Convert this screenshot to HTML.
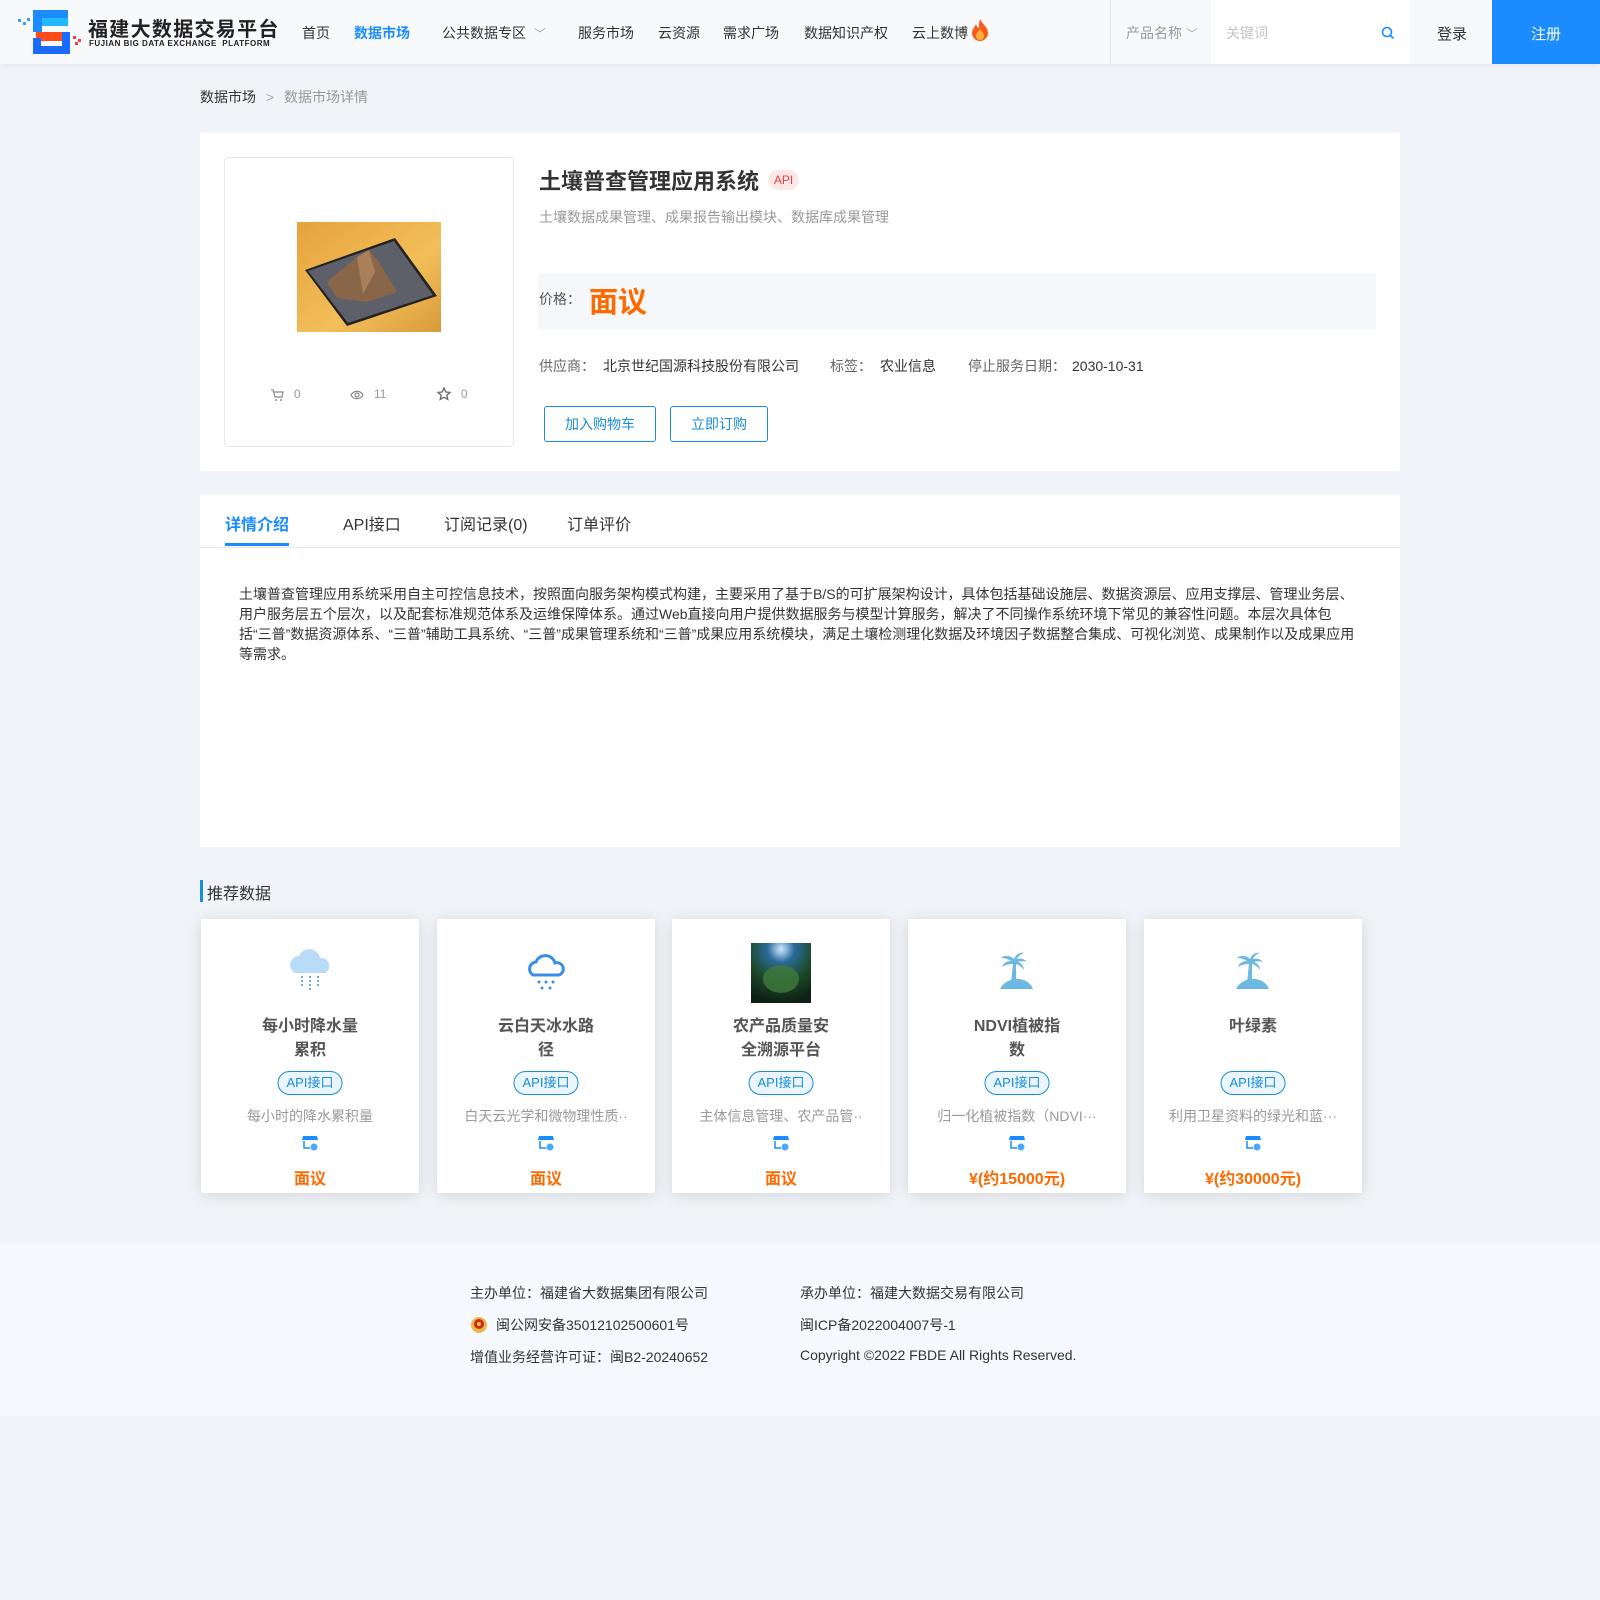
<!DOCTYPE html>
<html><head><meta charset="utf-8"><style>
*{margin:0;padding:0;box-sizing:border-box}
body{width:1600px;height:1600px;background:#f0f3f7;font-family:"Liberation Sans","Noto Sans CJK SC",sans-serif;color:#333;position:relative;overflow:hidden;font-size:14px}
.a{position:absolute;white-space:nowrap}
.hdr{position:absolute;left:0;top:0;width:1600px;height:64px;background:#f8f9fb;box-shadow:0 1px 4px rgba(0,0,0,.06)}
.nav{font-size:14px;color:#333;top:23px}
.card{position:absolute;background:#fff}
.rc{position:absolute;top:919px;width:218px;height:274px;background:#fff;box-shadow:0 2px 14px rgba(0,0,0,.12);text-align:center}
.rc .t{position:absolute;left:0;right:0;top:96px;font-size:16px;font-weight:bold;color:#555;line-height:24px}
.rc .tag{position:absolute;left:50%;transform:translateX(-50%);top:152px;height:24px;padding:0 8px;border:1px solid #1a8cd8;border-radius:12px;background:#eaf5fd;color:#1a8cd8;font-size:13px;line-height:22px}
.rc .d{position:absolute;left:20px;right:20px;top:187px;font-size:14px;color:#999;overflow:hidden;text-overflow:ellipsis;white-space:nowrap}
.rc .s{position:absolute;left:101px;top:216px}
.rc .p{position:absolute;left:0;right:0;top:246px;font-size:16px;font-weight:bold;color:#ff6a00}
.ic{position:absolute;left:84px;top:26px}
</style></head><body>
<div class="hdr">
<svg class="a" style="left:16px;top:10px" width="68" height="44" viewBox="0 0 68 44">
<rect x="17" y="0" width="35" height="8" fill="#1a8cff"/><rect x="17" y="0" width="9" height="22" fill="#1a8cff"/>
<rect x="26" y="8" width="26" height="8" fill="#22b8ff"/>
<rect x="20" y="22" width="34" height="9" fill="#ff4a1a"/><rect x="46" y="22" width="8" height="22" fill="#1a6cff"/><rect x="17" y="36" width="37" height="8" fill="#1a6cff"/><rect x="17" y="28" width="8" height="16" fill="#1a6cff"/>
<rect x="2" y="9" width="3" height="3" fill="#3aa0ff"/><rect x="7" y="12" width="3" height="3" fill="#3aa0ff"/><rect x="11" y="8" width="3" height="3" fill="#3aa0ff"/>
<rect x="57" y="26" width="3" height="3" fill="#ff3a3a"/><rect x="62" y="29" width="3" height="3" fill="#ff3a3a"/><rect x="59" y="32" width="3" height="3" fill="#ff3a3a"/>
</svg>
<div class="a" style="left:88px;top:13px;font-size:20px;font-weight:bold;color:#222;letter-spacing:1.3px">福建大数据交易平台</div>
<div class="a" style="left:89px;top:39px;font-size:8px;font-weight:bold;color:#222;letter-spacing:.5px">FUJIAN BIG DATA EXCHANGE&nbsp; PLATFORM</div>
<div class="a nav" style="left:302px">首页</div>
<div class="a nav" style="left:354px;color:#1a8cff;font-weight:bold">数据市场</div>
<div class="a nav" style="left:442px">公共数据专区 <span style="color:#aaa;font-size:12px;margin-left:4px">﹀</span></div>
<div class="a nav" style="left:578px">服务市场</div>
<div class="a nav" style="left:658px">云资源</div>
<div class="a nav" style="left:723px">需求广场</div>
<div class="a nav" style="left:804px">数据知识产权</div>
<div class="a nav" style="left:912px">云上数博</div>
<svg class="a" style="left:971px;top:19px" width="18" height="22" viewBox="0 0 18 22"><path d="M9 0C11 5 17 8 17 14a8 8 0 0 1-16 0C1 10 4 8 5 5c1 3 2 4 3 4C8 6 8 3 9 0z" fill="#ff5a1a"/><path d="M9 10c2 3 4 4 4 7a4 4 0 0 1-8 0c0-2 2-4 4-7z" fill="#ffb23a"/></svg>
<div class="a" style="left:1110px;top:0;width:1px;height:64px;background:#e3e6ea"></div>
<div class="a" style="left:1126px;top:23px;font-size:14px;color:#999">产品名称 <span style="font-size:12px;color:#aaa">﹀</span></div>
<div class="a" style="left:1211px;top:0;width:199px;height:64px;background:#fff"></div>
<div class="a" style="left:1226px;top:23px;font-size:14px;color:#c4c4c4">关键词</div>
<svg class="a" style="left:1381px;top:26px" width="14" height="14" viewBox="0 0 14 14"><circle cx="6" cy="6" r="4.5" fill="none" stroke="#1a8cff" stroke-width="1.6"/><path d="M9.5 9.5l3 3" stroke="#1a8cff" stroke-width="1.6"/></svg>
<div class="a" style="left:1410px;top:0;width:82px;height:64px;background:#f7f8fa"></div>
<div class="a" style="left:1437px;top:23px;font-size:15px;color:#333">登录</div>
<div class="a" style="left:1492px;top:0;width:108px;height:64px;background:#1a8cff"></div>
<div class="a" style="left:1531px;top:23px;font-size:15px;color:#fff">注册</div>
</div>

<div class="a" style="left:200px;top:87px;font-size:14px;color:#333">数据市场 <span style="color:#aaa;margin:0 6px">&gt;</span> <span style="color:#999">数据市场详情</span></div>

<div class="card" style="left:200px;top:133px;width:1200px;height:338px"></div>
<div class="a" style="left:224px;top:157px;width:290px;height:290px;border:1px solid #e8e8e8;border-radius:4px;background:#fff"></div>
<svg class="a" style="left:297px;top:222px" width="144" height="110" viewBox="0 0 144 110">
<defs><linearGradient id="bg" x1="0" y1="0" x2="1" y2="1"><stop offset="0" stop-color="#e6a23c"/><stop offset=".6" stop-color="#f2bf5a"/><stop offset="1" stop-color="#d99a3a"/></linearGradient></defs>
<rect width="144" height="110" fill="url(#bg)"/>
<path d="M8 48L98 16 140 74 50 104z" fill="#222"/><path d="M11 49L97 19 136 73 51 101z" fill="#5d6068"/>
<path d="M30 60L60 35 72 28 82 40 100 70 70 80 40 76z" fill="#8a6648"/><path d="M60 35L72 28 78 50 66 72z" fill="#a9805a"/>
</svg>
<svg class="a" style="left:270px;top:388px" width="14" height="14" viewBox="0 0 14 14"><path d="M1 2h2l2 7h7l1-5H4" fill="none" stroke="#888" stroke-width="1.2"/><circle cx="6" cy="12" r="1" fill="#888"/><circle cx="11" cy="12" r="1" fill="#888"/></svg>
<div class="a" style="left:294px;top:387px;font-size:12px;color:#999">0</div>
<svg class="a" style="left:350px;top:389px" width="14" height="12" viewBox="0 0 14 12"><path d="M1 6c3-5 9-5 12 0-3 5-9 5-12 0z" fill="none" stroke="#888" stroke-width="1.2"/><circle cx="7" cy="6" r="2" fill="none" stroke="#888" stroke-width="1.2"/></svg>
<div class="a" style="left:374px;top:387px;font-size:12px;color:#999">11</div>
<svg class="a" style="left:437px;top:387px" width="14" height="14" viewBox="0 0 14 14"><path d="M7 1l1.8 4 4.2.4-3.2 2.8 1 4.2L7 10.2 3.2 12.4l1-4.2L1 5.4l4.2-.4z" fill="none" stroke="#666" stroke-width="1.3"/></svg>
<div class="a" style="left:461px;top:387px;font-size:12px;color:#999">0</div>

<div class="a" style="left:539px;top:164px;font-size:22px;font-weight:bold;color:#333">土壤普查管理应用系统</div>
<div class="a" style="left:768px;top:170px;width:31px;height:20px;border-radius:10px;background:#fde8e8;color:#f03c3c;font-size:12px;text-align:center;line-height:20px">API</div>
<div class="a" style="left:539px;top:207px;font-size:14px;color:#999">土壤数据成果管理、成果报告输出模块、数据库成果管理</div>
<div class="a" style="left:538px;top:274px;width:838px;height:56px;background:#f5f7f9"></div>
<div class="a" style="left:539px;top:289px;font-size:14px;color:#555">价格：</div>
<div class="a" style="left:589px;top:279px;font-size:29px;font-weight:bold;color:#ff6a00">面议</div>
<div class="a" style="left:539px;top:356px;font-size:14px;color:#666">供应商：<span style="color:#333;margin-left:8px">北京世纪国源科技股份有限公司</span></div>
<div class="a" style="left:830px;top:356px;font-size:14px;color:#666">标签：<span style="color:#333;margin-left:8px">农业信息</span></div>
<div class="a" style="left:968px;top:356px;font-size:14px;color:#666">停止服务日期：<span style="color:#333;margin-left:6px">2030-10-31</span></div>
<div class="a" style="left:544px;top:406px;width:112px;height:36px;border:1px solid #1a8cd8;border-radius:3px;color:#1a8cd8;font-size:14px;text-align:center;line-height:34px">加入购物车</div>
<div class="a" style="left:670px;top:406px;width:98px;height:36px;border:1px solid #1a8cd8;border-radius:3px;color:#1a8cd8;font-size:14px;text-align:center;line-height:34px">立即订购</div>

<div class="card" style="left:200px;top:495px;width:1200px;height:352px"></div>
<div class="a" style="left:200px;top:547px;width:1200px;height:1px;background:#e8e8e8"></div>
<div class="a" style="left:225px;top:511px;font-size:16px;font-weight:bold;color:#1a8cff">详情介绍</div>
<div class="a" style="left:225px;top:543px;width:64px;height:3px;background:#1a8cff"></div>
<div class="a" style="left:343px;top:511px;font-size:16px;color:#333">API接口</div>
<div class="a" style="left:444px;top:511px;font-size:16px;color:#333">订阅记录(0)</div>
<div class="a" style="left:567px;top:511px;font-size:16px;color:#333">订单评价</div>
<div class="a" style="left:239px;top:584px;width:1122px;white-space:normal;font-size:14px;line-height:20px;color:#333">土壤普查管理应用系统采用自主可控信息技术，按照面向服务架构模式构建，主要采用了基于B/S的可扩展架构设计，具体包括基础设施层、数据资源层、应用支撑层、管理业务层、用户服务层五个层次，以及配套标准规范体系及运维保障体系。通过Web直接向用户提供数据服务与模型计算服务，解决了不同操作系统环境下常见的兼容性问题。本层次具体包括“三普”数据资源体系、“三普”辅助工具系统、“三普”成果管理系统和“三普”成果应用系统模块，满足土壤检测理化数据及环境因子数据整合集成、可视化浏览、成果制作以及成果应用等需求。</div>

<div class="a" style="left:200px;top:880px;width:3px;height:22px;background:#1a8cd8"></div>
<div class="a" style="left:207px;top:880px;font-size:16px;color:#333">推荐数据</div>

<div class="rc" style="left:201px">
<svg class="ic" width="50" height="50" viewBox="0 0 50 50"><path d="M10 28a9 9 0 0 1 4-17 11 11 0 0 1 21 2 8 8 0 0 1 5 15z" fill="#b8dcf8"/><g fill="#3a9ae8"><circle cx="17" cy="32" r="1"/><circle cx="17" cy="36" r="1"/><circle cx="17" cy="40" r="1"/><circle cx="25" cy="32" r="1"/><circle cx="25" cy="36" r="1"/><circle cx="25" cy="40" r="1"/><circle cx="25" cy="44" r="1"/><circle cx="33" cy="32" r="1"/><circle cx="33" cy="36" r="1"/><circle cx="33" cy="40" r="1"/></g></svg>
<div class="t">每小时降水量<br>累积</div><div class="tag">API接口</div><div class="d">每小时的降水累积量</div>
<svg class="s" width="16" height="16" viewBox="0 0 16 16"><path d="M1 1h14l1 4H0z" fill="#1a8cff"/><path d="M2 6v7h6" fill="none" stroke="#1a8cff" stroke-width="1.5"/><circle cx="12" cy="12" r="3.5" fill="#4aa8ff"/></svg>
<div class="p">面议</div></div>

<div class="rc" style="left:437px">
<svg class="ic" width="50" height="50" viewBox="0 0 50 50"><path d="M12 30a7 7 0 0 1 3-13 10 10 0 0 1 19 1 6 6 0 0 1 4 12z" fill="none" stroke="#3a8ee8" stroke-width="3"/><g fill="#3a8ee8"><circle cx="18" cy="37" r="1.5"/><circle cx="25" cy="37" r="1.5"/><circle cx="32" cy="37" r="1.5"/><circle cx="21" cy="43" r="1.5"/><circle cx="29" cy="43" r="1.5"/></g></svg>
<div class="t">云白天冰水路<br>径</div><div class="tag">API接口</div><div class="d">白天云光学和微物理性质··</div>
<svg class="s" width="16" height="16" viewBox="0 0 16 16"><path d="M1 1h14l1 4H0z" fill="#1a8cff"/><path d="M2 6v7h6" fill="none" stroke="#1a8cff" stroke-width="1.5"/><circle cx="12" cy="12" r="3.5" fill="#4aa8ff"/></svg>
<div class="p">面议</div></div>

<div class="rc" style="left:672px">
<svg class="a" style="left:79px;top:24px" width="60" height="60" viewBox="0 0 60 60"><defs><radialGradient id="g2" cx=".5" cy=".1" r=".9"><stop offset="0" stop-color="#cfe8ff"/><stop offset=".25" stop-color="#2a6a9a"/><stop offset=".6" stop-color="#1d4a2a"/><stop offset="1" stop-color="#0e2014"/></radialGradient></defs><rect width="60" height="60" fill="url(#g2)"/><ellipse cx="30" cy="36" rx="18" ry="14" fill="#3f7a3a" opacity=".8"/></svg>
<div class="t">农产品质量安<br>全溯源平台</div><div class="tag">API接口</div><div class="d">主体信息管理、农产品管··</div>
<svg class="s" width="16" height="16" viewBox="0 0 16 16"><path d="M1 1h14l1 4H0z" fill="#1a8cff"/><path d="M2 6v7h6" fill="none" stroke="#1a8cff" stroke-width="1.5"/><circle cx="12" cy="12" r="3.5" fill="#4aa8ff"/></svg>
<div class="p">面议</div></div>

<div class="rc" style="left:908px">
<svg class="ic" width="50" height="50" viewBox="0 0 50 50"><g fill="#6cb8e0"><path d="M22 14c-4-4-10-4-13-1 4 0 7 1 10 3-4 0-8 2-9 6 3-2 7-3 11-3l-2 19h5l0-19c3 1 6 3 8 6 0-4-3-7-6-8 3-1 7-1 9 0-2-3-7-4-10-3 1-3 4-5 7-6-4-1-8 1-10 6z"/><path d="M8 44c4-8 12-10 18-10s12 3 15 10z"/></g></svg>
<div class="t">NDVI植被指<br>数</div><div class="tag">API接口</div><div class="d">归一化植被指数（NDVI···</div>
<svg class="s" width="16" height="16" viewBox="0 0 16 16"><path d="M1 1h14l1 4H0z" fill="#1a8cff"/><path d="M2 6v7h6" fill="none" stroke="#1a8cff" stroke-width="1.5"/><circle cx="12" cy="12" r="3.5" fill="#4aa8ff"/></svg>
<div class="p">¥(约15000元)</div></div>

<div class="rc" style="left:1144px">
<svg class="ic" width="50" height="50" viewBox="0 0 50 50"><g fill="#6cb8e0"><path d="M22 14c-4-4-10-4-13-1 4 0 7 1 10 3-4 0-8 2-9 6 3-2 7-3 11-3l-2 19h5l0-19c3 1 6 3 8 6 0-4-3-7-6-8 3-1 7-1 9 0-2-3-7-4-10-3 1-3 4-5 7-6-4-1-8 1-10 6z"/><path d="M8 44c4-8 12-10 18-10s12 3 15 10z"/></g></svg>
<div class="t">叶绿素</div><div class="tag">API接口</div><div class="d">利用卫星资料的绿光和蓝···</div>
<svg class="s" width="16" height="16" viewBox="0 0 16 16"><path d="M1 1h14l1 4H0z" fill="#1a8cff"/><path d="M2 6v7h6" fill="none" stroke="#1a8cff" stroke-width="1.5"/><circle cx="12" cy="12" r="3.5" fill="#4aa8ff"/></svg>
<div class="p">¥(约30000元)</div></div>

<div class="a" style="left:0;top:1244px;width:1600px;height:172px;background:#f5f8fc"></div>
<div class="a" style="left:470px;top:1283px;font-size:14px;color:#333">主办单位：福建省大数据集团有限公司</div>
<svg class="a" style="left:470px;top:1315px" width="18" height="20" viewBox="0 0 18 20"><circle cx="9" cy="10" r="8" fill="#e8b84a"/><circle cx="9" cy="9" r="5" fill="#d02a1a"/><circle cx="9" cy="9" r="2" fill="#f2c84a"/></svg>
<div class="a" style="left:496px;top:1315px;font-size:14px;color:#333">闽公网安备35012102500601号</div>
<div class="a" style="left:470px;top:1347px;font-size:14px;color:#333">增值业务经营许可证：闽B2-20240652</div>
<div class="a" style="left:800px;top:1283px;font-size:14px;color:#333">承办单位：福建大数据交易有限公司</div>
<div class="a" style="left:800px;top:1315px;font-size:14px;color:#333">闽ICP备2022004007号-1</div>
<div class="a" style="left:800px;top:1347px;font-size:14px;color:#333">Copyright ©2022 FBDE All Rights Reserved.</div>
</body></html>
